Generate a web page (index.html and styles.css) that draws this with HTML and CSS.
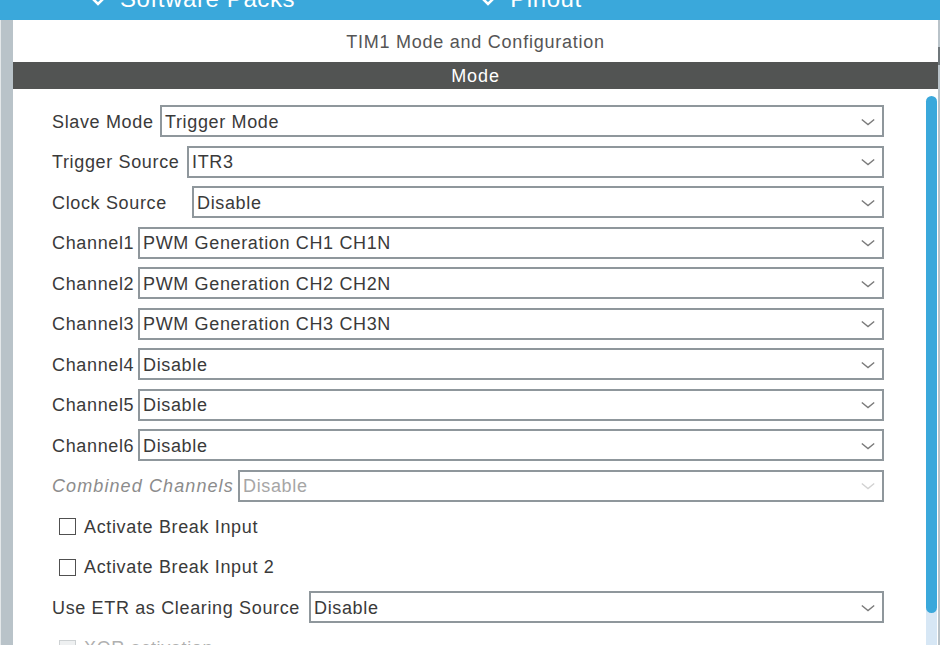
FILE: index.html
```html
<!DOCTYPE html>
<html>
<head>
<meta charset="utf-8">
<link rel="stylesheet" href="styles.css">
</head>
<body>
<div class="app">
  <div class="topbar">
    <div class="tab tab-software">
      <svg class="tab-chev" width="12" height="10" viewBox="0 0 12 10"><polyline points="1,2 6,7 11,2" fill="none" stroke="#fff" stroke-width="2.6"/></svg>
      <span class="tab-text">Software Packs</span>
    </div>
    <div class="tab tab-pinout">
      <svg class="tab-chev" width="12" height="10" viewBox="0 0 12 10"><polyline points="1,2 6,7 11,2" fill="none" stroke="#fff" stroke-width="2.6"/></svg>
      <span class="tab-text">Pinout</span>
    </div>
  </div>
  <div class="main">
    <div class="leftstrip"></div>
    <div class="panel">
      <div class="title">TIM1 Mode and Configuration</div>
      <div class="modebar">Mode</div>
      <div class="body">
        <div class="form">
          <div class="row">
            <span class="label w-slave">Slave Mode</span>
            <div class="select"><span class="value">Trigger Mode</span><svg class="chev" width="14" height="8" viewBox="0 0 14 8"><polyline points="0.8,1.5 7,6.5 13.2,1.5" fill="none" stroke="#7a7a7a" stroke-width="1.4"/></svg></div>
          </div>
          <div class="row">
            <span class="label w-trigger">Trigger Source</span>
            <div class="select"><span class="value">ITR3</span><svg class="chev" width="14" height="8" viewBox="0 0 14 8"><polyline points="0.8,1.5 7,6.5 13.2,1.5" fill="none" stroke="#7a7a7a" stroke-width="1.4"/></svg></div>
          </div>
          <div class="row">
            <span class="label w-clock">Clock Source</span>
            <div class="select"><span class="value">Disable</span><svg class="chev" width="14" height="8" viewBox="0 0 14 8"><polyline points="0.8,1.5 7,6.5 13.2,1.5" fill="none" stroke="#7a7a7a" stroke-width="1.4"/></svg></div>
          </div>
          <div class="row">
            <span class="label w-channel">Channel1</span>
            <div class="select"><span class="value">PWM Generation CH1 CH1N</span><svg class="chev" width="14" height="8" viewBox="0 0 14 8"><polyline points="0.8,1.5 7,6.5 13.2,1.5" fill="none" stroke="#7a7a7a" stroke-width="1.4"/></svg></div>
          </div>
          <div class="row">
            <span class="label w-channel">Channel2</span>
            <div class="select"><span class="value">PWM Generation CH2 CH2N</span><svg class="chev" width="14" height="8" viewBox="0 0 14 8"><polyline points="0.8,1.5 7,6.5 13.2,1.5" fill="none" stroke="#7a7a7a" stroke-width="1.4"/></svg></div>
          </div>
          <div class="row">
            <span class="label w-channel">Channel3</span>
            <div class="select"><span class="value">PWM Generation CH3 CH3N</span><svg class="chev" width="14" height="8" viewBox="0 0 14 8"><polyline points="0.8,1.5 7,6.5 13.2,1.5" fill="none" stroke="#7a7a7a" stroke-width="1.4"/></svg></div>
          </div>
          <div class="row">
            <span class="label w-channel">Channel4</span>
            <div class="select"><span class="value">Disable</span><svg class="chev" width="14" height="8" viewBox="0 0 14 8"><polyline points="0.8,1.5 7,6.5 13.2,1.5" fill="none" stroke="#7a7a7a" stroke-width="1.4"/></svg></div>
          </div>
          <div class="row">
            <span class="label w-channel">Channel5</span>
            <div class="select"><span class="value">Disable</span><svg class="chev" width="14" height="8" viewBox="0 0 14 8"><polyline points="0.8,1.5 7,6.5 13.2,1.5" fill="none" stroke="#7a7a7a" stroke-width="1.4"/></svg></div>
          </div>
          <div class="row">
            <span class="label w-channel">Channel6</span>
            <div class="select"><span class="value">Disable</span><svg class="chev" width="14" height="8" viewBox="0 0 14 8"><polyline points="0.8,1.5 7,6.5 13.2,1.5" fill="none" stroke="#7a7a7a" stroke-width="1.4"/></svg></div>
          </div>
          <div class="row">
            <span class="label w-combined disabled-label">Combined Channels</span>
            <div class="select select-disabled"><span class="value">Disable</span><svg class="chev" width="14" height="8" viewBox="0 0 14 8"><polyline points="0.8,1.5 7,6.5 13.2,1.5" fill="none" stroke="#d2d2d2" stroke-width="1.4"/></svg></div>
          </div>
          <div class="row check-row">
            <span class="checkbox"></span>
            <span class="check-label">Activate Break Input</span>
          </div>
          <div class="row check-row">
            <span class="checkbox"></span>
            <span class="check-label">Activate Break Input 2</span>
          </div>
          <div class="row">
            <span class="label w-etr">Use ETR as Clearing Source</span>
            <div class="select"><span class="value">Disable</span><svg class="chev" width="14" height="8" viewBox="0 0 14 8"><polyline points="0.8,1.5 7,6.5 13.2,1.5" fill="none" stroke="#7a7a7a" stroke-width="1.4"/></svg></div>
          </div>
          <div class="row check-row">
            <span class="checkbox checkbox-disabled"></span>
            <span class="check-label check-label-disabled">XOR activation</span>
          </div>
        </div>
        <div class="scroll">
          <div class="thumb"></div>
          <div class="track"></div>
        </div>
      </div>
    </div>
    <div class="rightstrip"><div class="rightmark"></div></div>
  </div>
</div>
</body>
</html>
```

FILE: styles.css
```css
html, body {
  margin: 0;
  padding: 0;
  background: #ffffff;
}
.app {
  width: 940px;
  height: 645px;
  overflow: hidden;
  display: flex;
  flex-direction: column;
  font-family: "Liberation Sans", Arial, sans-serif;
}
.topbar {
  height: 20px;
  flex: none;
  background: #3aa8db;
  display: flex;
  overflow: hidden;
}
.tab {
  display: flex;
  align-items: flex-start;
  color: #ffffff;
  font-size: 24px;
  line-height: 24px;
  letter-spacing: 0.6px;
}
.tab-software {
  margin-left: 92px;
}
.tab-pinout {
  margin-left: 187px;
}
.tab-chev {
  margin-top: -3px;
  flex: none;
}
.tab-text {
  margin-top: -13px;
  margin-left: 16px;
}
.tab-pinout .tab-text {
  margin-left: 16px;
}
.main {
  flex: 1;
  display: flex;
  min-height: 0;
}
.leftstrip {
  width: 12px;
  flex: none;
  background: #b9c3c9;
  border-left: 1px solid #e4e8ea;
}
.panel {
  flex: 1;
  display: flex;
  flex-direction: column;
  min-width: 0;
}
.rightstrip {
  width: 2px;
  flex: none;
  background: #b9c3c9;
  padding-top: 27px;
}
.rightmark {
  height: 18px;
  background: #6f777b;
}
.title {
  height: 42px;
  box-sizing: border-box;
  padding-top: 3px;
  flex: none;
  display: flex;
  align-items: center;
  justify-content: center;
  color: #555555;
  font-size: 18px;
  letter-spacing: 0.75px;
}
.modebar {
  height: 27px;
  box-sizing: border-box;
  padding-top: 2px;
  flex: none;
  background: #525453;
  color: #ffffff;
  display: flex;
  align-items: center;
  justify-content: center;
  font-size: 18px;
  letter-spacing: 0.9px;
}
.body {
  flex: 1;
  display: flex;
  min-height: 0;
  overflow: hidden;
}
.form {
  flex: 1;
  padding: 16px 42px 0 39px;
  display: flex;
  flex-direction: column;
  gap: 8.5px;
  min-width: 0;
}
.row {
  height: 32px;
  flex: none;
  display: flex;
  align-items: center;
  font-size: 18px;
  letter-spacing: 0.65px;
  color: #3a3a3a;
}
.label,
.value,
.check-label {
  padding-top: 2px;
}
.label {
  flex: none;
  white-space: nowrap;
}
.w-slave { width: 108px; }
.w-trigger { width: 135px; }
.w-clock { width: 140px; }
.w-channel { width: 86px; }
.w-combined { width: 186px; }
.w-etr { width: 257px; }
.disabled-label {
  color: #8c8c8c;
  font-style: italic;
  letter-spacing: 1.1px;
}
.select {
  flex: 1;
  height: 32px;
  box-sizing: border-box;
  border: 2px solid #8f979c;
  display: flex;
  align-items: center;
  padding: 0 7px 0 3px;
  background: #ffffff;
}
.value {
  flex: 1;
  white-space: nowrap;
}
.select-disabled {
  color: #a6a6a6;
}
.chev {
  flex: none;
  margin-top: 1px;
}
.check-row {
  padding-left: 7px;
}
.checkbox {
  width: 17px;
  height: 17px;
  box-sizing: border-box;
  border: 1.5px solid #505050;
  flex: none;
  background: #ffffff;
  margin-top: 1px;
}
.checkbox-disabled {
  border-color: #cdd1d3;
  background: #eef0f1;
}
.check-label {
  margin-left: 8px;
}
.check-label-disabled {
  color: #b0b0b0;
}
.scroll {
  width: 11px;
  flex: none;
  margin-right: 1px;
  padding-top: 7px;
  display: flex;
  flex-direction: column;
}
.thumb {
  height: 517px;
  flex: none;
  background: #3aa8db;
  border-radius: 6px;
  position: relative;
  z-index: 1;
}
.track {
  flex: 1;
  background: #d7e7f5;
  margin-top: -6px;
}
```
